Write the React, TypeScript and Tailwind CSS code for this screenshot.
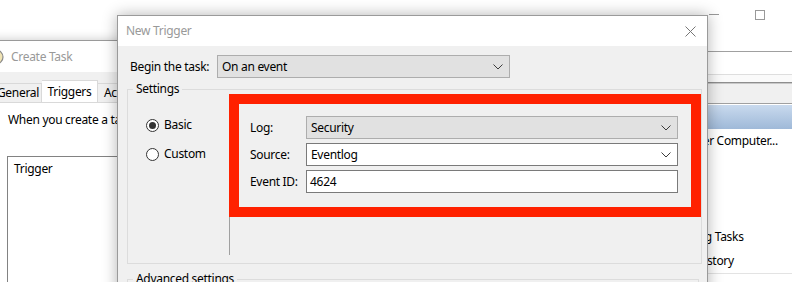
import clsx from 'clsx'

const FONT = "font-['Noto_Sans','Liberation_Sans',sans-serif]"

function Chevron() {
  return (
    <svg width="10" height="6" viewBox="0 0 10 6" className="shrink-0">
      <path d="M0.5 0.5 L5 5 L9.5 0.5" fill="none" stroke="#3c3c3c" strokeWidth="1" />
    </svg>
  )
}

/**
 * Win10 style combo box: grey when read-only, white when editable
 */
function ComboBox({ value, editable, className }: { value: string; editable?: boolean; className?: string }) {
  return (
    <div
      className={clsx(
        'flex h-[23px] items-center justify-between border pl-[4px] pr-[6px]',
        editable ? 'border-[#7a7a7a] bg-white' : 'border-[#adadad] bg-[#e1e1e1]',
        className
      )}
    >
      <span>{value}</span>
      <Chevron />
    </div>
  )
}

function TextBox({ value }: { value: string }) {
  return (
    <div className="flex h-[23px] items-center border border-[#7a7a7a] bg-white pl-[3px]">
      <span>{value}</span>
    </div>
  )
}

function Radio({ label, checked }: { label: string; checked?: boolean }) {
  return (
    <div className="flex items-center gap-[5px]">
      <span className="flex h-[13px] w-[13px] items-center justify-center rounded-full border border-[#333] bg-white">
        {checked && <span className="h-[7px] w-[7px] rounded-full bg-[#333]" />}
      </span>
      <span>{label}</span>
    </div>
  )
}

function MainWindow() {
  // action pane rows; the short ones sit entirely under the dialog
  const actions = [
    'Connect to Another Computer...',
    '',
    '',
    '',
    'Display All Running Tasks',
    'Enable All Tasks History',
  ]
  return (
    <div className="absolute left-[409px] top-0 flex h-[290px] w-[420px] flex-col bg-white">
      {/* caption buttons */}
      <div className="flex h-[29px] justify-end">
        <div className="flex w-[46px] items-center justify-center">
          <span className="h-px w-[10px] bg-[#999]" />
        </div>
        <div className="flex w-[46px] items-center justify-center">
          <span className="h-[10px] w-[10px] border border-[#999]" />
        </div>
        <div className="w-[46px]" />
      </div>
      <div className="h-[23px] border-b border-[#a0a0a0]" />
      <div className="h-[23px] border-b border-[#dedede]" />
      <div className="h-[7px] bg-[#fafafa]" />
      <div className="h-px bg-[#8e8e8e]" />
      <div className="h-[20px] border-t border-[#c8c8c8] bg-[#f0f0f0]" />
      <div className="h-px bg-[#a0a0a0]" />
      <div className="h-px bg-white" />
      <div className="h-[24px] bg-gradient-to-b from-[#c9daee] to-[#9fb9d8]" />
      <div className="flex flex-col pl-[200px]">
        {actions.map((a, i) => (
          <div key={i} className="flex h-[24px] items-center whitespace-nowrap">
            {a}
          </div>
        ))}
      </div>
      <div className="h-px bg-[#e3e3e3]" />
    </div>
  )
}

function CreateTaskWindow() {
  return (
    <div className="absolute left-[-24px] top-[40px] flex h-[260px] w-[170px] flex-col overflow-hidden border border-[#9a9a9a] bg-[#f0f0f0] shadow-[0_0_10px_rgba(0,0,0,0.22)]">
      <div className="flex h-[31px] shrink-0 items-center gap-[7px] bg-white pl-[11px]">
        <svg width="16" height="16" viewBox="0 0 16 16" className="shrink-0">
          <circle cx="8" cy="8" r="7" fill="#f1e4b4" stroke="#8a8a8a" strokeWidth="1.2" />
          <path d="M8 4 V8 H11" stroke="#666" strokeWidth="1" fill="none" />
        </svg>
        <span className="text-[#999]">Create Task</span>
      </div>
      <div className="flex h-[30px] shrink-0 items-end pl-[17px]">
        <div className="flex h-[19px] w-[48px] shrink-0 items-center justify-center border border-b-0 border-[#d9d9d9]">
          General
        </div>
        <div className="flex h-[22px] w-[56px] shrink-0 items-center justify-center border border-b-0 border-l-0 border-[#d9d9d9] bg-white">
          Triggers
        </div>
        <div className="flex h-[19px] w-[52px] shrink-0 items-center justify-center border border-b-0 border-l-0 border-[#d9d9d9]">
          Actions
        </div>
      </div>
      <div className="ml-[4px] min-h-0 flex-1 overflow-hidden border-t border-[#d9d9d9] bg-white pl-[27px] pt-[9px]">
        <div className="whitespace-nowrap">When you create a task</div>
        <div className="-ml-px mt-[28px] h-[200px] border border-[#828282] pl-[6px] pt-[4px]">
          <div>Trigger</div>
        </div>
      </div>
    </div>
  )
}

function NewTriggerDialog() {
  return (
    <div className="absolute left-[117px] top-[15px] flex h-[320px] w-[591px] flex-col border border-[#9a9a9a] bg-[#f0f0f0] shadow-[0_0_14px_rgba(0,0,0,0.3)]">
      <div className="flex h-[30px] shrink-0 items-center justify-between bg-white pl-[8px] pr-[11px]">
        <span className="text-[#999]">New Trigger</span>
        <svg width="11" height="11" viewBox="0 0 11 11">
          <path d="M0.5 0.5 L10.5 10.5 M10.5 0.5 L0.5 10.5" stroke="#777" strokeWidth="1" />
        </svg>
      </div>

      <div className="px-[9px] pt-[9px]">
        <div className="flex items-center pl-[3px]">
          <span className="w-[87px]">Begin the task:</span>
          <ComboBox value="On an event" className="w-[293px]" />
        </div>

        <fieldset className="mt-[3px] w-[572px] border border-[#dcdcdc] pb-[8px]">
          <legend className="ml-[5px] px-[3px] leading-[16px]">Settings</legend>
          <div className="flex">
            <div className="flex w-[101px] flex-col gap-[13px] pl-[18px] pt-[20px]">
              <Radio label="Basic" checked />
              <Radio label="Custom" />
            </div>
            <div className="flex-1 border-l border-[#a0a0a0] pb-[38px]">
              {/* red annotation frame */}
              <div className="-ml-px -mt-[3px] w-[472px] border-[10px] border-[#ff2100] pb-[14px] pl-[11px] pr-[13px] pt-[12px]">
                <div className="grid grid-cols-[56px_1fr] items-center gap-y-[4px]">
                  <span>Log:</span>
                  <ComboBox value="Security" />
                  <span>Source:</span>
                  <ComboBox value="Eventlog" editable />
                  <span>Event ID:</span>
                  <TextBox value="4624" />
                </div>
              </div>
            </div>
          </div>
        </fieldset>

        <fieldset className="mt-[7px] h-[60px] w-[572px] border border-[#dcdcdc]">
          <legend className="ml-[5px] px-[3px] leading-[16px]">Advanced settings</legend>
        </fieldset>
      </div>
    </div>
  )
}

export default function App() {
  return (
    <div
      className={clsx(
        'relative h-[282px] w-[792px] overflow-hidden bg-white text-[12px] leading-[16px] tracking-[-0.3px] text-black',
        FONT
      )}
    >
      <MainWindow />
      <CreateTaskWindow />
      <NewTriggerDialog />
    </div>
  )
}
